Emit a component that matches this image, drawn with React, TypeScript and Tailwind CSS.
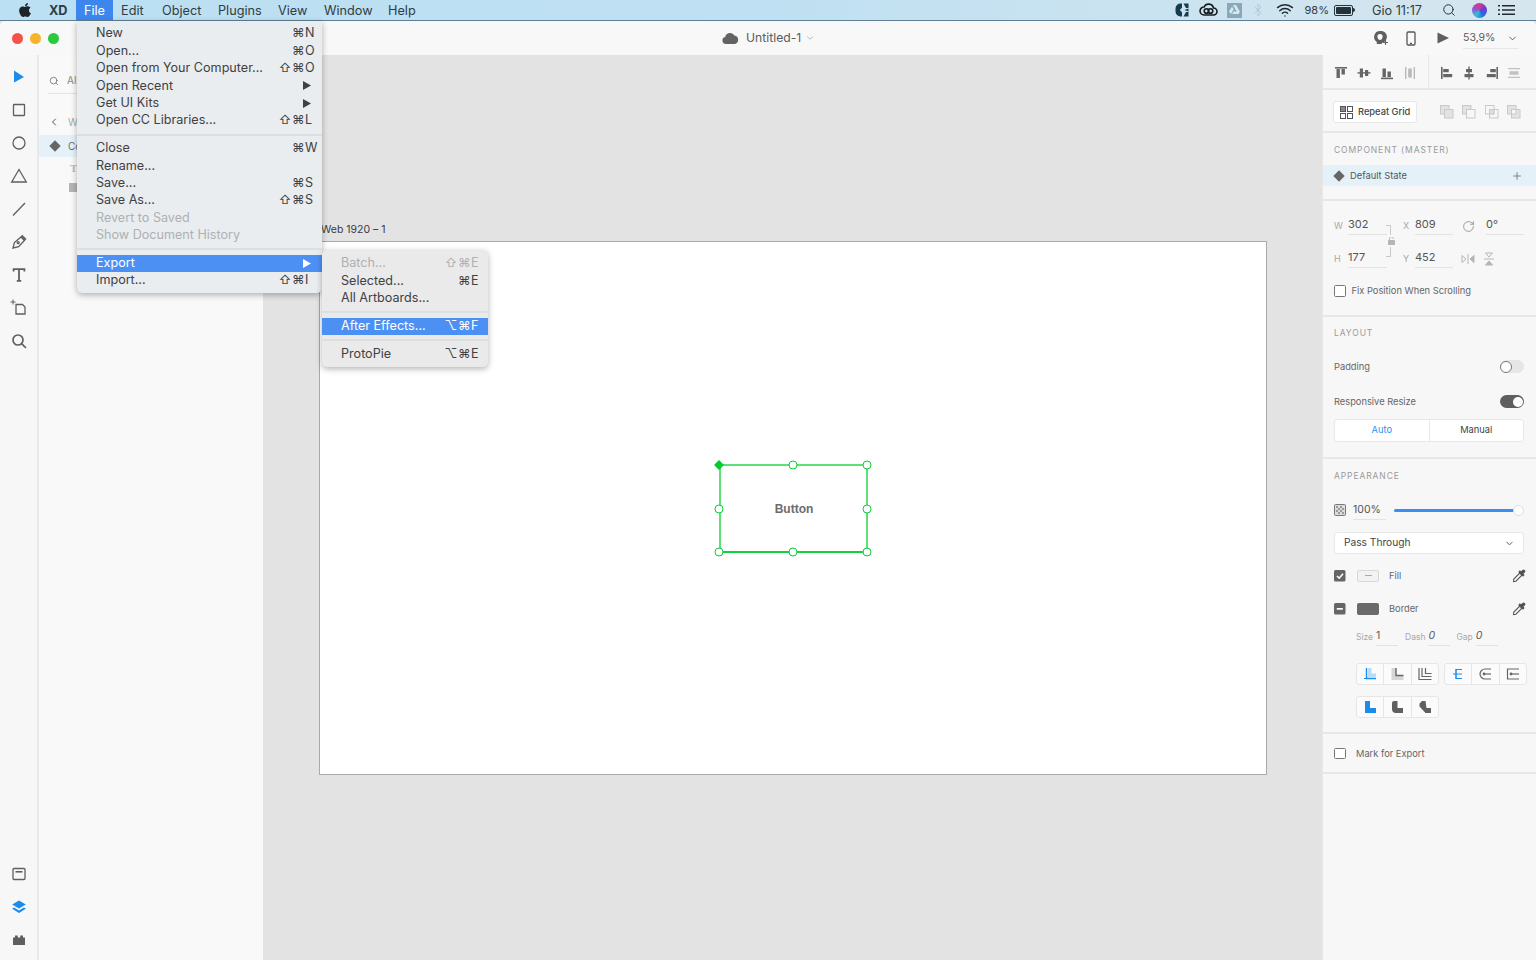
import { FaApple } from "react-icons/fa";
import { Bluetooth, ChevronDown, ChevronLeft, Plus, RotateCw, Search, Wifi } from "lucide-react";
import type { ReactNode } from "react";

const font = "font-['Inter','DejaVu_Sans',sans-serif]";

type MenuRow =
  | { sep: true }
  | { label: string; keys?: string; arrow?: boolean; off?: boolean; active?: boolean };

const fileMenu: MenuRow[] = [
  { label: "New", keys: "⌘N" },
  { label: "Open...", keys: "⌘O" },
  { label: "Open from Your Computer...", keys: "⇧⌘O" },
  { label: "Open Recent", arrow: true },
  { label: "Get UI Kits", arrow: true },
  { label: "Open CC Libraries...", keys: "⇧⌘L" },
  { sep: true },
  { label: "Close", keys: "⌘W" },
  { label: "Rename..." },
  { label: "Save...", keys: "⌘S" },
  { label: "Save As...", keys: "⇧⌘S" },
  { label: "Revert to Saved", off: true },
  { label: "Show Document History", off: true },
  { sep: true },
  { label: "Export", arrow: true, active: true },
  { label: "Import...", keys: "⇧⌘I" },
];

const exportMenu: MenuRow[] = [
  { label: "Batch...", keys: "⇧⌘E", off: true },
  { label: "Selected...", keys: "⌘E" },
  { label: "All Artboards..." },
  { sep: true },
  { label: "After Effects...", keys: "⌥⌘F", active: true },
  { sep: true },
  { label: "ProtoPie", keys: "⌥⌘E" },
];

function MenuRows({ rows }: { rows: MenuRow[] }) {
  return (
    <>
      {rows.map((row, i) => {
        if ("sep" in row) {
          return (
            <div key={i} className="flex h-[10.5px] items-center">
              <div className="h-[2px] w-full bg-[#dcdfe1]" />
            </div>
          );
        }
        const color = row.active ? "bg-[#4d90f4] text-white" : row.off ? "text-[#aeb1b3]" : "text-[#3f4142]";
        return (
          <div key={i} className={`flex h-[17.4px] items-center justify-between pl-[19px] text-[12.6px] leading-none ${color}`}>
            <span>{row.label}</span>
            {row.keys && (
              <span className="flex">
                <span className="tracking-[0.5px]">{row.keys.slice(0, -1)}</span>
                <span className="w-[17px]">{row.keys.slice(-1)}</span>
              </span>
            )}
            {row.arrow && (
              <svg width="8" height="9" viewBox="0 0 8 9" className="mr-[11px]">
                <path d="M0 0l8 4.500L0 9z" fill={row.active ? "#fff" : "#3f4142"} />
              </svg>
            )}
          </div>
        );
      })}
    </>
  );
}

function Stroke({ children, size = 18, color = "#5f5f5f", width = 1.3 }: { children: ReactNode; size?: number; color?: string; width?: number }) {
  return (
    <svg width={size} height={size} viewBox="0 0 18 18" fill="none" stroke={color} strokeWidth={width}>
      {children}
    </svg>
  );
}

const tools: ReactNode[] = [
  <svg key="a" width="18" height="18" viewBox="0 0 18 18"><path d="M4 2.500l10 6.500-10 5.500z" fill="#1b8ceb" /></svg>,
  <Stroke key="b"><rect x="3.500" y="3.500" width="11" height="11" rx="0.5" /></Stroke>,
  <Stroke key="c"><circle cx="9" cy="9" r="6" /></Stroke>,
  <Stroke key="d"><path d="M9 2.500L16.300 15H1.700z" /></Stroke>,
  <Stroke key="e"><path d="M3 15.500L15 3" /></Stroke>,
  <Stroke key="f"><path d="M3 15l1.400-5.500L11 4l3.400 3.500L8.600 13.600z" /><path d="M11.500 2.500l4.300 4.200" strokeWidth="2" /><circle cx="8.200" cy="9.700" r="1" /></Stroke>,
  <Stroke key="g" width="1.8"><path d="M3.600 5.500V3.200h10.800v2.300M9 3.200v11.400M6.800 14.800h4.400" /></Stroke>,
  <Stroke key="h"><path d="M6 5.500h6.500l2.500 2.500v7H6z" /><path d="M0.500 3h5M3 0.500v5" strokeWidth="1" /></Stroke>,
  <Stroke key="i" width="1.7"><circle cx="8" cy="8" r="5" /><path d="M11.600 11.600L16 16" /></Stroke>,
];

const bottomTools: ReactNode[] = [
  <Stroke key="a"><rect x="3" y="3.500" width="12" height="11" rx="1" /><path d="M5.500 6.800h7" strokeWidth="1.6" /></Stroke>,
  <svg key="b" width="18" height="18" viewBox="0 0 18 18" fill="#1b8ceb"><path d="M9 2.500l6.800 4L9 10.500l-6.800-4z" /><path d="M4 9.500l-1.800 1.200L9 15l6.800-4.300L14 9.500l-5 3z" /></svg>,
  <svg key="c" width="18" height="18" viewBox="0 0 18 18" fill="#5f5f5f"><path d="M3 6.500h2V4.400h2.800v2.100h2.400V4.400H13v2.100h2V14H3z" /></svg>,
];

const alignIcons: ReactNode[] = [
  <g key="1" fill="#666"><rect x="3" y="3" width="12" height="1.600" /><rect x="4.500" y="5" width="3.400" height="9" /><rect x="9.500" y="5" width="3.400" height="5.500" /></g>,
  <g key="2" fill="#666"><rect x="2.500" y="8.200" width="13" height="1.400" /><rect x="4.800" y="4.500" width="3.200" height="9" /><rect x="10" y="6" width="3.200" height="6" /></g>,
  <g key="3" fill="#666"><rect x="3" y="13.600" width="12" height="1.600" /><rect x="4.500" y="4.500" width="3.400" height="8.600" /><rect x="9.500" y="7.500" width="3.400" height="5.600" /></g>,
  <g key="4" fill="#b9b9b9"><rect x="4" y="3" width="1.400" height="12" /><rect x="12.600" y="3" width="1.400" height="12" /><rect x="7.200" y="4.500" width="3.600" height="9" /></g>,
  <g key="5" fill="#666"><rect x="3" y="3" width="1.600" height="12" /><rect x="5.200" y="5" width="5.500" height="3.200" /><rect x="5.200" y="10" width="9" height="3.200" /></g>,
  <g key="6" fill="#666"><rect x="8.300" y="2.500" width="1.400" height="13" /><rect x="6" y="5" width="6" height="3.200" /><rect x="4.500" y="10" width="9" height="3.200" /></g>,
  <g key="7" fill="#666"><rect x="13.400" y="3" width="1.600" height="12" /><rect x="7.300" y="5" width="5.500" height="3.200" /><rect x="3.800" y="10" width="9" height="3.200" /></g>,
  <g key="8" fill="#c2c2c2"><rect x="3" y="4" width="12" height="1.300" /><rect x="3" y="12.700" width="12" height="1.300" /><rect x="4.500" y="7.200" width="9" height="3.600" /></g>,
];

const boolIcons: ReactNode[] = [
  <g key="1" stroke="#c9c9c9" fill="#e3e3e3"><rect x="2.500" y="2.500" width="8.500" height="8.500" /><rect x="6.500" y="6.500" width="8.500" height="8.500" /></g>,
  <g key="2" stroke="#c9c9c9" fill="none"><rect x="2.500" y="2.500" width="8.500" height="8.500" fill="#e3e3e3" /><rect x="6.500" y="6.500" width="8.500" height="8.500" fill="#f7f7f7" /></g>,
  <g key="3" stroke="#c9c9c9" fill="none"><rect x="2.500" y="2.500" width="8.500" height="8.500" /><rect x="6.500" y="6.500" width="8.500" height="8.500" /><rect x="6.500" y="6.500" width="4.500" height="4.500" fill="#dedede" /></g>,
  <g key="4" stroke="#c9c9c9" fill="#e3e3e3"><rect x="2.500" y="2.500" width="8.500" height="8.500" /><rect x="6.500" y="6.500" width="8.500" height="8.500" /><rect x="6.500" y="6.500" width="4.500" height="4.500" fill="#f7f7f7" /></g>,
];

function IconCell({ children, className = "" }: { children: ReactNode; className?: string }) {
  return (
    <svg width="18" height="18" viewBox="0 0 18 18" className={className}>
      {children}
    </svg>
  );
}

function Section({ height, children, className = "" }: { height: string; children: ReactNode; className?: string }) {
  return <section className={`${height} shrink-0 border-b-2 border-[#e7e7e7] ${className}`}>{children}</section>;
}

function Heading({ children }: { children: ReactNode }) {
  return <div className="px-[11px] text-[8.5px] leading-[12px] tracking-[0.9px] text-[#9a9a9a]">{children}</div>;
}

function Check({ state }: { state?: "on" | "mixed" }) {
  if (state === "on") {
    return (
      <svg width="12" height="12" viewBox="0 0 12 12" className="shrink-0">
        <rect width="11.500" height="11.500" rx="1.500" fill="#666" />
        <path d="M3 6l2.200 2.200L9 3.800" fill="none" stroke="#fff" strokeWidth="1.6" />
      </svg>
    );
  }
  if (state === "mixed") {
    return (
      <svg width="12" height="12" viewBox="0 0 12 12" className="shrink-0">
        <rect width="11.500" height="11.500" rx="1.500" fill="#666" />
        <rect x="2.800" y="5" width="6" height="1.700" fill="#fff" />
      </svg>
    );
  }
  return <span className="block h-[11.5px] w-[11.5px] shrink-0 rounded-[1.5px] border border-[#777] bg-white" />;
}

function Eyedropper() {
  return (
    <svg width="14" height="14" viewBox="0 0 14 14" className="ml-auto" fill="none" stroke="#555" strokeWidth="1.1">
      <path d="M1.500 12.500l.3-2.400 6-6 2.100 2.100-6 6z" />
      <path d="M7 3l4 4 .9-.9-1.300-1.300 1.800-1.800a1.100 1.100 0 00-1.600-1.600L9 3.200 7.900 2.100z" fill="#4a4a4a" />
    </svg>
  );
}

function Field({ label, value, labelW, width }: { label: string; value: string; labelW: string; width: string }) {
  return (
    <div className="flex items-center">
      <span className={`${labelW} text-[9px] text-[#a8a8a8]`}>{label}</span>
      <span className={`${width} border-b border-[#e3e3e3] pb-[3px] text-[11px] leading-[14px] text-[#565656]`}>{value}</span>
    </div>
  );
}

function StrokeField({ label, value, italic, width, mr }: { label: string; value: string; italic?: boolean; width: string; mr: string }) {
  return (
    <div className={`flex items-center ${mr}`}>
      <span className="text-[8.5px] text-[#a8a8a8]">{label}</span>
      <span className={`${width} ml-[3px] border-b border-[#e3e3e3] pb-[2px] text-[10.5px] leading-[14px] text-[#5c5c5c] ${italic ? "italic" : ""}`}>{value}</span>
    </div>
  );
}

function Toggle({ on }: { on?: boolean }) {
  return on ? (
    <span className="flex h-[13px] w-[24px] items-center justify-end rounded-full bg-[#5f5f5f] pr-[1.5px]">
      <span className="h-[10px] w-[10px] rounded-full bg-white" />
    </span>
  ) : (
    <span className="flex h-[13px] w-[24px] items-center rounded-full bg-[#e6e6e6]">
      <span className="h-[12px] w-[12px] rounded-full border-[1.5px] border-[#777] bg-white" />
    </span>
  );
}

const cornerIcons: ReactNode[] = [
  <g key="1"><path d="M7 3v9h8V8.500h-4.500V3z" fill="#bcdcf6" /><path d="M5.500 3v10.500H15" stroke="#1b8ceb" strokeWidth="1.4" fill="none" /><path d="M3 13.500h2" stroke="#1b8ceb" strokeWidth="1.2" /></g>,
  <g key="2"><path d="M3.500 3h4.500v7h7.500v5h-12z" fill="#d6d6d6" /><path d="M8 3v7.500h7.500" stroke="#666" strokeWidth="1.4" fill="none" /></g>,
  <g key="3" stroke="#666" fill="none" strokeWidth="1.2"><path d="M3 3v11.500h12.500M6 3v8.500h9.500M9.500 3v5.500h6" /></g>,
  <g key="4" fill="none"><path d="M7 4v10" stroke="#1b8ceb" strokeWidth="1.5" /><path d="M7 4.500h6M4 9h9M7 13.500h6" stroke="#1b8ceb" strokeWidth="1.2" /></g>,
  <g key="5" stroke="#666" fill="none" strokeWidth="1.2"><path d="M15 4H9a5 5 0 000 10h6" /><path d="M8 9h7" /><circle cx="8" cy="9" r="0.8" fill="#666" /></g>,
  <g key="6" stroke="#666" fill="none" strokeWidth="1.2"><path d="M15 4H3.500v10H15" /><path d="M7 9h8" /><circle cx="7" cy="9" r="0.8" fill="#666" /></g>,
];

const joinIcons: ReactNode[] = [
  <path key="1" d="M4 3h5v7h6v5H4z" fill="#1b8ceb" />,
  <path key="2" d="M6 3h3.500v7H15v5H8a4 4 0 01-4-4V5a2 2 0 012-2z" fill="#5f5f5f" />,
  <path key="3" d="M3.500 5.500L6 3h3.500l1 7H15v5H9.500l-6-6.500z" fill="#5f5f5f" />,
];

function ButtonGroup({ icons, className = "" }: { icons: ReactNode[]; className?: string }) {
  return (
    <div className={`flex h-[22px] w-[83px] rounded-[3px] border border-[#e6e6e6] bg-[#fbfbfb] ${className}`}>
      {icons.map((icon, i) => (
        <div key={i} className={`flex flex-1 items-center justify-center ${i > 0 ? "border-l border-[#e6e6e6]" : ""}`}>
          <IconCell>{icon}</IconCell>
        </div>
      ))}
    </div>
  );
}

function Handle({ className }: { className: string }) {
  return <span className={`absolute h-[9px] w-[9px] -translate-x-1/2 -translate-y-1/2 rounded-full border-[1.5px] border-[#08cf3a] bg-white ${className}`} />;
}

function RightPanel() {
  return (
    <aside className="flex w-[214px] shrink-0 flex-col border-l border-[#e7e7e7] bg-[#f7f7f7]">
      <Section height="h-[35px]" className="flex">
        <div className="flex w-[106px] items-center justify-between border-r border-[#e7e7e7] pl-[9px] pr-[9px] pt-[3px]">
          {alignIcons.slice(0, 4).map((icon, i) => <IconCell key={i}>{icon}</IconCell>)}
        </div>
        <div className="flex flex-1 items-center justify-between pl-[9px] pr-[13px] pt-[3px]">
          {alignIcons.slice(4).map((icon, i) => <IconCell key={i}>{icon}</IconCell>)}
        </div>
      </Section>
      <Section height="h-[43px]" className="flex items-center pl-[10px] pr-[13px] pt-[3px]">
        <div className="flex h-[22px] w-[84px] items-center gap-[5px] rounded-[3px] border border-[#e8e8e8] bg-white pl-[6px]">
          <svg width="13" height="13" viewBox="0 0 13 13" fill="none" stroke="#555">
            <rect x="0.5" y="0.5" width="5" height="5" fill="#888" /><rect x="7.500" y="0.5" width="5" height="5" /><rect x="0.5" y="7.500" width="5" height="5" /><rect x="7.500" y="7.500" width="5" height="5" />
          </svg>
          <span className="text-[9.3px] font-medium text-[#444]">Repeat Grid</span>
        </div>
        <div className="ml-[21px] flex flex-1 justify-between">
          {boolIcons.map((icon, i) => <IconCell key={i}>{icon}</IconCell>)}
        </div>
      </Section>
      <Section height="h-[68px]" className="pt-[11px]">
        <Heading>COMPONENT (MASTER)</Heading>
        <div className="mt-[9px] flex h-[21px] items-center bg-[#e5f1f9] pl-[11px] pr-[13px] text-[9.3px] text-[#555]">
          <span className="mr-[6px] h-[8px] w-[8px] translate-x-[1px] rotate-45 bg-[#666]" />
          <span className="ml-[2px]">Default State</span>
          <Plus size={12} strokeWidth={1.3} className="ml-auto text-[#555]" />
        </div>
      </Section>
      <Section height="h-[116px]" className="relative pt-[16px]">
        <div className="flex items-center pl-[11px]">
          <Field label="W" value="302" labelW="w-[14px]" width="w-[39px]" />
          <span className="w-[16px]" />
          <Field label="X" value="809" labelW="w-[12px]" width="w-[38px]" />
          <RotateCw size={13} strokeWidth={1.3} className="ml-[9px] text-[#777]" />
          <span className="ml-[11px] w-[38px] border-b border-[#e3e3e3] pb-[3px] text-[11px] leading-[14px] text-[#565656]">0°</span>
        </div>
        <div className="mt-[15px] flex items-center pl-[11px]">
          <Field label="H" value="177" labelW="w-[14px]" width="w-[39px]" />
          <span className="w-[16px]" />
          <Field label="Y" value="452" labelW="w-[12px]" width="w-[38px]" />
          <svg width="14" height="12" viewBox="0 0 14 12" fill="none" stroke="#b5b5b5" className="ml-[8px]">
            <path d="M1 2.500l4 3.500-4 3.500zM7 1v10" /><path d="M13 2.500L9 6l4 3.500z" fill="#b5b5b5" />
          </svg>
          <svg width="12" height="14" viewBox="0 0 12 14" fill="none" stroke="#b5b5b5" className="ml-[8px]">
            <path d="M2.500 1L6 5l3.500-4zM1 7h10" /><path d="M2.500 13L6 9l3.500 4z" fill="#b5b5b5" />
          </svg>
        </div>
        {/* link bracket between W and H */}
        <div className="absolute left-[63px] top-[24px] h-[10px] w-[5px] border-r border-t border-[#c9c9c9]" />
        <div className="absolute left-[63px] top-[46px] h-[10px] w-[5px] border-b border-r border-[#c9c9c9]" />
        <svg width="7" height="8" viewBox="0 0 7 8" className="absolute left-[64.5px] top-[36px]" fill="#b5b5b5">
          <rect y="3" width="7" height="5" rx="0.5" /><path d="M1.500 3V1.800a2 2 0 014 0" fill="none" stroke="#b5b5b5" />
        </svg>
        <div className="mt-[16px] flex items-center gap-[6px] pl-[11px] text-[9.3px] text-[#666]">
          <Check />
          Fix Position When Scrolling
        </div>
      </Section>
      <Section height="h-[142px]" className="pt-[10px]">
        <Heading>LAYOUT</Heading>
        <div className="mt-[21px] flex items-center justify-between pl-[11px] pr-[12px] text-[9.3px] text-[#666]">
          Padding
          <Toggle />
        </div>
        <div className="mt-[21px] flex items-center justify-between pl-[11px] pr-[12px] text-[9.3px] text-[#666]">
          Responsive Resize
          <Toggle on />
        </div>
        <div className="ml-[11px] mr-[12px] mt-[10px] flex h-[23px] rounded-[3px] border border-[#e8e8e8] bg-white text-[9.3px]">
          <div className="flex flex-1 items-center justify-center border-r border-[#e8e8e8] text-[#2c94ee]">Auto</div>
          <div className="flex flex-1 items-center justify-center text-[#444]">Manual</div>
        </div>
      </Section>
      <Section height="h-[275px]" className="pt-[11px]">
        <Heading>APPEARANCE</Heading>
        <div className="mt-[18px] flex items-center pl-[11px]">
          <svg width="12" height="12" viewBox="0 0 12 12" className="shrink-0">
            <rect x="0.5" y="0.5" width="11" height="11" rx="1" fill="#ddd" stroke="#777" />
            <path d="M2 2h2v2H2zM6 2h2v2H6zM4 4h2v2H4zM8 4h2v2H8zM2 6h2v2H2zM6 6h2v2H6zM4 8h2v2H4zM8 8h2v2H8z" fill="#999" />
          </svg>
          <span className="ml-[7px] w-[33px] border-b border-[#e3e3e3] pb-[2px] pt-[3px] text-[10.5px] leading-[14px] text-[#555]">100%</span>
          <div className="relative ml-[8px] h-[3px] w-[125px] rounded-full bg-[#3a8df2]">
            <span className="absolute -right-[5px] -top-[4px] h-[11px] w-[11px] rounded-full border border-[#ddd] bg-white" />
          </div>
        </div>
        <div className="ml-[11px] mr-[12px] mt-[12px] flex h-[22px] items-center justify-between rounded-[3px] border border-[#e8e8e8] bg-white pl-[9px] pr-[8px] text-[10.2px] text-[#444]">
          Pass Through
          <ChevronDown size={11} className="text-[#555]" />
        </div>
        <div className="mt-[15px] flex h-[13px] items-center pl-[11px] pr-[10px] text-[9.3px] text-[#666]">
          <Check state="on" />
          <span className="ml-[11px] flex h-[12px] w-[22px] items-center justify-center rounded-[2px] border border-[#d9d9d9] bg-[#f2f2f2]">
            <span className="h-px w-[7px] bg-[#aaa]" />
          </span>
          <span className="ml-[10px]">Fill</span>
          <Eyedropper />
        </div>
        <div className="mt-[20px] flex h-[13px] items-center pl-[11px] pr-[10px] text-[9.3px] text-[#666]">
          <Check state="mixed" />
          <span className="ml-[11px] h-[12px] w-[22px] rounded-[2px] bg-[#6a6a6a]" />
          <span className="ml-[10px]">Border</span>
          <Eyedropper />
        </div>
        <div className="mt-[14px] flex items-center pl-[33px]">
          <StrokeField label="Size" value="1" width="w-[22px]" mr="mr-[7px]" />
          <StrokeField label="Dash" value="0" italic width="w-[22px]" mr="mr-[6px]" />
          <StrokeField label="Gap" value="0" italic width="w-[22px]" />
        </div>
        <div className="ml-[33px] mt-[17px] flex gap-[5px]">
          <ButtonGroup icons={cornerIcons.slice(0, 3)} />
          <ButtonGroup icons={cornerIcons.slice(3)} />
        </div>
        <ButtonGroup icons={joinIcons} className="ml-[33px] mt-[11px]" />
      </Section>
      <Section height="h-[40px]" className="flex items-center gap-[10.5px] pl-[11px] pt-[1px] text-[9.3px] text-[#666]">
        <Check />
        Mark for Export
      </Section>
    </aside>
  );
}

// only the slivers that stick out from under the open File menu are visible here
function LayersPanel() {
  return (
    <aside className="w-[226px] shrink-0 border-l-2 border-[#e8e8e8] bg-[#f9f9f9] pt-[17px] text-[10px] text-[#888]">
      <div className="ml-[9px] mr-[10px] flex h-[22px] items-center border-b border-[#e3e3e3] pb-[4px]">
        <Search size={10} strokeWidth={1.8} className="ml-[1px] text-[#666]" />
        <span className="ml-[8px]">Al</span>
      </div>
      <div className="mt-[21px] flex h-[14px] items-center pl-[9px]">
        <ChevronLeft size={12} className="text-[#555]" />
        <span className="ml-[8px] text-[#aaa]">W</span>
      </div>
      <div className="mt-[6px] flex h-[22px] items-center bg-[#e5f1f9] pl-[12px] text-[#666]">
        <span className="h-[8px] w-[8px] rotate-45 bg-[#666]" />
        <span className="ml-[9px]">Co</span>
      </div>
      <div className="mt-[2px] flex h-[18px] items-center pl-[31px] font-['Liberation_Serif',serif] text-[11px] font-bold text-[#bbb]">T</div>
      <div className="mt-[1px] flex h-[18px] items-center pl-[30px]">
        <span className="h-[9px] w-[10px] bg-[#b5b5b5]" />
      </div>
    </aside>
  );
}

export default function App() {
  return (
    <div className={`relative flex h-[960px] w-[1536px] flex-col overflow-hidden bg-[#e3e3e3] ${font}`}>
      <header className="flex h-[21px] shrink-0 items-center border-b border-[#5d7f96] bg-gradient-to-r from-[#bbdff3] via-[#bfe0f2] to-[#d6e6ee] text-[12.7px] text-[#2e3c45]">
        <FaApple size={16} className="ml-[17px] text-[#1d2427]" />
        <span className="ml-[16px] w-[27px] pt-[1px] font-bold">XD</span>
        <span className="flex h-[20px] w-[37px] items-center justify-center bg-[#3d86ee] pt-[1px] text-white">File</span>
        <span className="ml-[8px] w-[41px] pt-[1px]">Edit</span>
        <span className="w-[56px] pt-[1px]">Object</span>
        <span className="w-[60px] pt-[1px]">Plugins</span>
        <span className="w-[46px] pt-[1px]">View</span>
        <span className="w-[64px] pt-[1px]">Window</span>
        <span className="pt-[1px]">Help</span>
        <div className="ml-auto flex items-center">
          <svg width="14" height="14" viewBox="0 0 14 14" fill="#173c4f"><path d="M7 0.5v4.300L4.800 7 7 9.200v4.300H5.500A5 5 0 010.5 8.500v-3a5 5 0 015-5zM8.500 0.5h5V5H11zM8.500 13.500h5V9H11zM9.500 7l4-1.500v3z" /></svg>
          <svg width="19" height="14" viewBox="0 0 19 14" fill="none" stroke="#141c20" strokeWidth="1.6" className="ml-[10px]"><path d="M5 12h9.500a3 3 0 000-7 5 5 0 00-9.400-1A4 4 0 005 12z" /><circle cx="7.500" cy="8" r="2.300" /><circle cx="11.500" cy="8" r="2.300" /></svg>
          <span className="ml-[9px] flex h-[15px] w-[15px] items-center justify-center bg-[#87a9bb]">
            <svg width="11" height="10" viewBox="0 0 11 10" fill="#d7e8f0"><path d="M4 0h3l4 7H8zM3 1.500L4.600 4.300 2 9 0 6.500zM3 9l1.600-2.500H11L9.500 9z" /></svg>
          </span>
          <Bluetooth size={14} strokeWidth={1.3} className="ml-[9px] text-[#a9c2cf]" />
          <Wifi size={18} strokeWidth={1.9} className="ml-[11px] text-[#202b31]" />
          <span className="ml-[11px] text-[11px]">98%</span>
          <span className="relative ml-[5px] flex h-[11px] w-[19px] items-center rounded-[2px] border border-[#26323a] p-[1px]">
            <span className="h-full w-full rounded-[1px] bg-[#26323a]" />
            <span className="absolute -right-[3px] h-[4px] w-[2px] rounded-r-sm bg-[#26323a]" />
          </span>
          <span className="ml-[19px] pt-[1px] text-[12.7px]">Gio 11:17</span>
          <Search size={14} strokeWidth={1.6} className="ml-[20px] text-[#1f2a30]" />
          <span className="ml-[16px] h-[15px] w-[15px] rounded-full bg-[conic-gradient(#d33b8e,#6c3ad9,#2b6fd6,#2ec4d9,#9c4bd3,#d33b8e)]" />
          <svg width="17" height="12" viewBox="0 0 17 12" fill="#1f2a30" className="ml-[11px] mr-[21px]">
            <path d="M0 1h2v1.600H0zM4 1h13v1.600H4zM0 5.200h2v1.600H0zM4 5.200h13v1.600H4zM0 9.400h2V11H0zM4 9.400h13V11H4z" />
          </svg>
        </div>
      </header>

      <div className="flex min-h-0 flex-1 flex-col overflow-hidden rounded-t-[5px]">
        <div className="relative flex h-[34px] shrink-0 items-center bg-[#f8f8f8]">
          <div className="ml-[12px] flex gap-[7px]">
            <span className="h-[11px] w-[11px] rounded-full bg-[#f2544c]" />
            <span className="h-[11px] w-[11px] rounded-full bg-[#f6b32e]" />
            <span className="h-[11px] w-[11px] rounded-full bg-[#2bc840]" />
          </div>
          <div className="absolute left-[722px] flex items-center text-[12.2px] text-[#5b5b5b]">
            <svg width="17" height="12" viewBox="0 0 17 12" fill="#636363"><path d="M4 12a3.600 3.600 0 01-.8-7.100A5 5 0 0112.500 3.600 4.300 4.300 0 0113 12z" /></svg>
            <span className="ml-[7px]">Untitled-1</span>
            <ChevronDown size={10} className="ml-[4px] text-[#aaa]" />
          </div>
          <div className="ml-auto flex items-center">
            <svg width="16" height="16" viewBox="0 0 16 16" fill="#5f5f5f"><path d="M7 1a6 6 0 00-3.200 11v2h5V13a6 6 0 00-1.800-12zm0 3a2.600 2.600 0 012.600 2.800C9.600 8.500 8.400 10 7 10S4.400 8.500 4.400 6.800A2.600 2.600 0 017 4z" /><path d="M12.500 10v5M10 12.500h5" stroke="#5f5f5f" fill="none" /></svg>
            <svg width="10" height="15" viewBox="0 0 10 15" fill="none" stroke="#555" strokeWidth="1.3" className="ml-[17px]"><rect x="1" y="1" width="8" height="13" rx="1.200" /><path d="M4 12.300h2" /></svg>
            <svg width="12" height="12" viewBox="0 0 12 12" fill="#5f5f5f" className="ml-[21px]"><path d="M0.500 0.500L12 6 .5 11.500z" /></svg>
            <div className="ml-[14px] flex h-[21px] w-[55px] items-center justify-between border-b border-[#e7e7e7] pt-[1px] text-[10.5px] text-[#5b5b5b]">
              53,9%
              <ChevronDown size={11} className="text-[#555]" />
            </div>
            <span className="w-[18px]" />
          </div>
        </div>

        <div className="flex min-h-0 flex-1">
          <nav className="flex w-[37px] shrink-0 flex-col justify-between bg-[#f7f7f7] pb-[3.5px] pt-[5px]">
            <div className="flex flex-col items-center">
              {tools.map((tool, i) => <div key={i} className="flex h-[33px] items-center justify-center">{tool}</div>)}
            </div>
            <div className="flex flex-col items-center">
              {bottomTools.map((tool, i) => <div key={i} className="flex h-[33px] items-center justify-center">{tool}</div>)}
            </div>
          </nav>
          <LayersPanel />
          <main className="relative min-w-0 flex-1 bg-[#e3e3e3]">
            <span className="absolute left-[58px] top-[167px] text-[10.5px] text-[#3c3c3c]">Web 1920 – 1</span>
            <div className="absolute left-[55.5px] top-[186px] h-[534px] w-[948px] border border-[#a9a9a9] bg-white">
              <div className="absolute left-[399px] top-[222px] flex h-[89px] w-[149px] items-center justify-center border-2 border-[#5fdf78] border-b-[#14d13e] pl-[2px] pt-[1px] font-['Liberation_Sans',sans-serif] text-[12px] font-bold text-[#6c6c6c]">
                Button
              </div>
              <span className="absolute left-[399.5px] top-[222.5px] h-[7px] w-[7px] -translate-x-1/2 -translate-y-1/2 rotate-45 bg-[#00cc2c]" />
              <Handle className="left-[473.5px] top-[222.5px]" />
              <Handle className="left-[547.5px] top-[222.5px]" />
              <Handle className="left-[399.5px] top-[266.5px]" />
              <Handle className="left-[547.5px] top-[266.5px]" />
              <Handle className="left-[399.5px] top-[310px]" />
              <Handle className="left-[473.5px] top-[310px]" />
              <Handle className="left-[547.5px] top-[310px]" />
            </div>
          </main>
          <RightPanel />
        </div>
      </div>

      {/* open menus */}
      <div className="absolute left-[77px] top-[21px] w-[245px] rounded-b-[5px] bg-[#e9edef] pb-[4px] pt-[4px] shadow-[0_2px_6px_rgba(0,0,0,0.3)]">
        <MenuRows rows={fileMenu} />
      </div>
      <div className="absolute left-[322px] top-[250px] w-[166px] rounded-[5px] bg-[#eaeaea] pb-[4px] pt-[5px] shadow-[0_2px_6px_rgba(0,0,0,0.3)]">
        <MenuRows rows={exportMenu} />
      </div>
    </div>
  );
}
